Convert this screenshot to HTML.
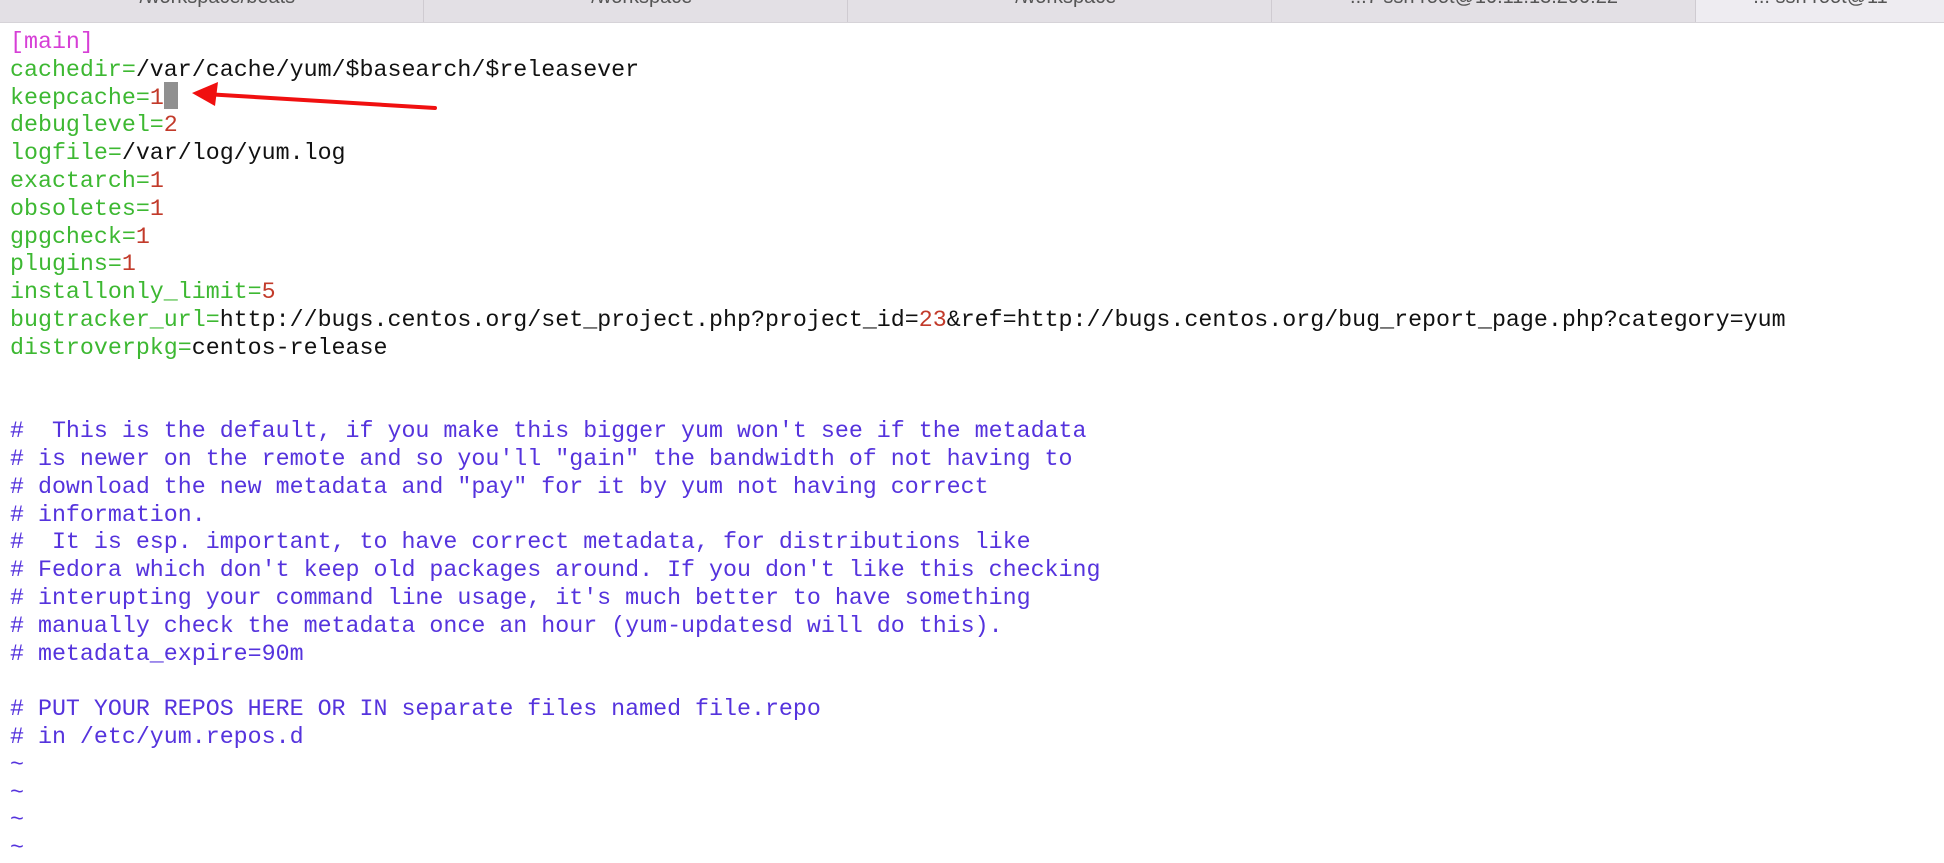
<!DOCTYPE html>
<html><head><meta charset="utf-8"><style>
html,body{margin:0;padding:0;background:#fff;width:1944px;height:852px;overflow:hidden}
.tabs{position:absolute;left:0;top:0;width:1944px;height:22px;background:#e3e0e5;border-bottom:1px solid #d6d3d8;overflow:hidden}
.tab{position:absolute;top:0;height:22px;border-left:1px solid #cfcbd1;font:20px "Liberation Sans",sans-serif;color:#555}
.tab span{position:absolute;top:-14px;left:0;right:0;text-align:center}
pre{position:absolute;left:10px;top:29px;margin:0;font-family:"Liberation Mono","DejaVu Sans Mono",monospace;font-size:23.3px;line-height:27.8px;color:#111;letter-spacing:0}
.g{color:#3db832}.r{color:#c23a2a}.m{color:#d63fd6}.b{color:#5533dd}
.cur{position:absolute;left:164px;top:82px;width:14px;height:27px;background:#909090}
</style></head><body>
<div class="tabs">
<div class="tab" style="left:0;width:423px;border-left:none"><span>~/workspace/beats</span></div>
<div class="tab" style="left:423px;width:424px"><span>~/workspace</span></div>
<div class="tab" style="left:847px;width:424px"><span>~/workspace</span></div>
<div class="tab" style="left:1271px;width:424px"><span>...7 ssh root@10.11.13.200:22</span></div>
<div class="tab" style="left:1695px;width:249px;background:#eeecf1"><span>...  ssh root@11</span></div>
</div>
<div class="cur"></div>
<pre><span class="m">[main]</span>
<span class="g">cachedir=</span>/var/cache/yum/$basearch/$releasever
<span class="g">keepcache=</span><span class="r">1</span>
<span class="g">debuglevel=</span><span class="r">2</span>
<span class="g">logfile=</span>/var/log/yum.log
<span class="g">exactarch=</span><span class="r">1</span>
<span class="g">obsoletes=</span><span class="r">1</span>
<span class="g">gpgcheck=</span><span class="r">1</span>
<span class="g">plugins=</span><span class="r">1</span>
<span class="g">installonly_limit=</span><span class="r">5</span>
<span class="g">bugtracker_url=</span>http://bugs.centos.org/set_project.php?project_id=<span class="r">23</span>&amp;ref=http://bugs.centos.org/bug_report_page.php?category=yum
<span class="g">distroverpkg=</span>centos-release


<span class="b">#  This is the default, if you make this bigger yum won't see if the metadata
# is newer on the remote and so you'll "gain" the bandwidth of not having to
# download the new metadata and "pay" for it by yum not having correct
# information.
#  It is esp. important, to have correct metadata, for distributions like
# Fedora which don't keep old packages around. If you don't like this checking
# interupting your command line usage, it's much better to have something
# manually check the metadata once an hour (yum-updatesd will do this).
# metadata_expire=90m

# PUT YOUR REPOS HERE OR IN separate files named file.repo
# in /etc/yum.repos.d
~
~
~
~</span></pre>
<svg style="position:absolute;left:0;top:0" width="1944" height="852">
<line x1="435" y1="108" x2="205" y2="94" stroke="#f01010" stroke-width="4" stroke-linecap="round"/>
<polygon points="192,93 218,82 215,106" fill="#f01010"/>
</svg>
</body></html>
